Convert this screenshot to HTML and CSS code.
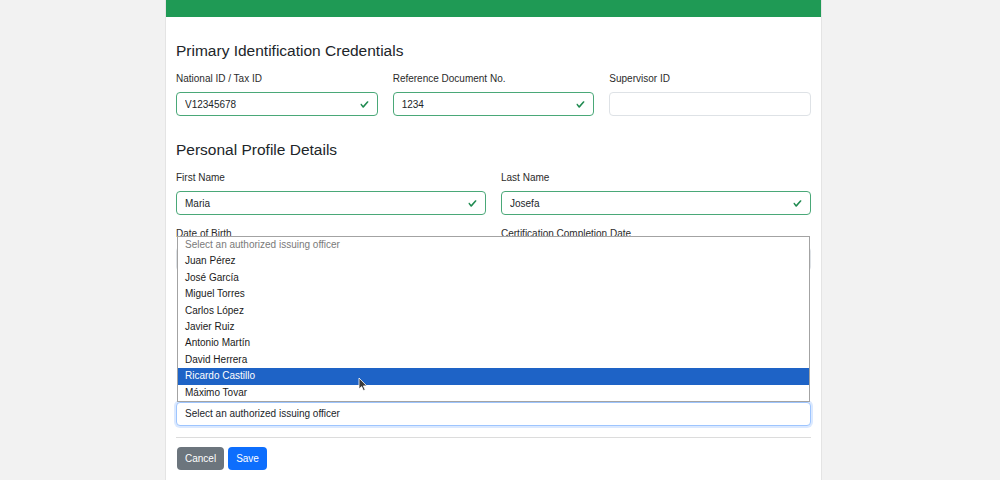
FILE: index.html
```html
<!DOCTYPE html>
<html lang="en">
<head>
<meta charset="utf-8">
<title>Issuing Form</title>
<link rel="stylesheet" href="styles.css">
</head>
<body>
<div class="card">
  <div class="card-bar"></div>
  <div class="card-body">
    <h2 class="section-title">Primary Identification Credentials</h2>
    <div class="row cols-3">
      <div class="field">
        <label class="label">National ID / Tax ID</label>
        <div class="control">
          <input class="input is-valid" type="text" value="V12345678">
          <svg class="check" viewBox="0 0 8 8"><path d="M2.3 6.73.6 4.53c-.4-1.04.46-1.4 1.1-.8l1.1 1.4 3.4-3.8c.6-.63 1.6-.27 1.2.7l-4 4.6c-.43.5-.8.4-1.1.1z"/></svg>
        </div>
      </div>
      <div class="field">
        <label class="label">Reference Document No.</label>
        <div class="control">
          <input class="input is-valid" type="text" value="1234">
          <svg class="check" viewBox="0 0 8 8"><path d="M2.3 6.73.6 4.53c-.4-1.04.46-1.4 1.1-.8l1.1 1.4 3.4-3.8c.6-.63 1.6-.27 1.2.7l-4 4.6c-.43.5-.8.4-1.1.1z"/></svg>
        </div>
      </div>
      <div class="field">
        <label class="label">Supervisor ID</label>
        <div class="control">
          <input class="input" type="text" value="">
        </div>
      </div>
    </div>

    <h2 class="section-title spaced">Personal Profile Details</h2>
    <div class="row cols-2">
      <div class="field">
        <label class="label">First Name</label>
        <div class="control">
          <input class="input is-valid" type="text" value="Maria">
          <svg class="check" viewBox="0 0 8 8"><path d="M2.3 6.73.6 4.53c-.4-1.04.46-1.4 1.1-.8l1.1 1.4 3.4-3.8c.6-.63 1.6-.27 1.2.7l-4 4.6c-.43.5-.8.4-1.1.1z"/></svg>
        </div>
      </div>
      <div class="field">
        <label class="label">Last Name</label>
        <div class="control">
          <input class="input is-valid" type="text" value="Josefa">
          <svg class="check" viewBox="0 0 8 8"><path d="M2.3 6.73.6 4.53c-.4-1.04.46-1.4 1.1-.8l1.1 1.4 3.4-3.8c.6-.63 1.6-.27 1.2.7l-4 4.6c-.43.5-.8.4-1.1.1z"/></svg>
        </div>
      </div>
    </div>
    <div class="row cols-2">
      <div class="field">
        <label class="label">Date of Birth</label>
        <div class="control"><input class="input" type="text" value=""></div>
      </div>
      <div class="field">
        <label class="label">Certification Completion Date</label>
        <div class="control"><input class="input" type="text" value=""></div>
      </div>
    </div>

    <div class="select-wrap" aria-label="Issuing Officer">
      <div class="select">Select an authorized issuing officer</div>
      <ul class="options">
        <li class="option placeholder">Select an authorized issuing officer</li>
        <li class="option">Juan Pérez</li>
        <li class="option">José García</li>
        <li class="option">Miguel Torres</li>
        <li class="option">Carlos López</li>
        <li class="option">Javier Ruiz</li>
        <li class="option">Antonio Martín</li>
        <li class="option">David Herrera</li>
        <li class="option active">Ricardo Castillo</li>
        <li class="option">Máximo Tovar</li>
      </ul>
    </div>

    <hr class="divider">
    <div class="actions">
      <button class="btn btn-secondary" type="button">Cancel</button>
      <button class="btn btn-primary" type="button">Save</button>
    </div>
  </div>
</div>
<svg class="cursor" viewBox="0 0 10 15"><path d="M1 1 L1 12 L3.6 9.6 L5.4 13.6 L7.2 12.8 L5.4 8.9 L8.8 8.9 Z"/></svg>
</body>
</html>
```

FILE: styles.css
```css
* { box-sizing: border-box; }

html, body {
  margin: 0;
  padding: 0;
}

body {
  background: #f2f2f2;
  font-family: "Liberation Sans", Arial, sans-serif;
  color: #212529;
  height: 480px;
  overflow: hidden;
  position: relative;
}

.card {
  margin-left: 165px;
  width: 657px;
  min-height: 480px;
  background: #fff;
  border-left: 1px solid #e4e4e4;
  border-right: 1px solid #e4e4e4;
}

.card-bar {
  height: 17px;
  background: #1f9a55;
}

.card-body {
  padding: 24px 10px 20px;
}

.section-title {
  margin: 0 0 12px;
  font-size: 15.5px;
  line-height: 19px;
  font-weight: 400;
  color: #212529;
}

.section-title.spaced {
  margin-top: 24px;
}

.row {
  display: grid;
  column-gap: 15px;
  margin-bottom: 12px;
}

.cols-3 { grid-template-columns: repeat(3, 1fr); }
.cols-2 { grid-template-columns: repeat(2, 1fr); }

.field {
  display: flex;
  flex-direction: column;
  min-width: 0;
}

.label {
  display: block;
  font-size: 10px;
  line-height: 12px;
  padding-top: 1px;
  margin-bottom: 7px;
  color: #2b2b2b;
}

.control {
  position: relative;
}

.input {
  display: block;
  width: 100%;
  height: 24px;
  margin: 0;
  padding: 0 24px 0 8px;
  font-family: "Liberation Sans", Arial, sans-serif;
  font-size: 10px;
  color: #212529;
  background: #fff;
  border: 1px solid #dee2e6;
  border-radius: 4px;
  outline: none;
}

.input.is-valid {
  border-color: #4aa878;
}

.check {
  position: absolute;
  right: 9px;
  top: 8px;
  width: 9px;
  height: 9px;
  fill: #1f8a50;
}

.select-wrap {
  position: relative;
  margin-top: 131px;
}

.select {
  height: 24px;
  padding: 0 8px;
  font-size: 10px;
  line-height: 22px;
  color: #212529;
  background: #fff;
  border: 1px solid #9ec5fe;
  border-radius: 4px;
  box-shadow: 0 0 0 2px rgba(13, 110, 253, 0.15);
}

.options {
  position: absolute;
  left: 1px;
  right: 1px;
  bottom: 100%;
  margin: 0;
  padding: 0;
  list-style: none;
  background: #fff;
  border: 1px solid #a3a3a3;
}

.option {
  height: 16.4px;
  line-height: 16.4px;
  padding-left: 7px;
  font-size: 10px;
  color: #1a1a1a;
  white-space: nowrap;
}

.option.placeholder {
  color: #7a7a7a;
}

.option.active {
  background: #1e63c6;
  color: #fff;
}

.divider {
  margin: 11px 0 9px;
  border: 0;
  border-top: 1px solid #dcdcdc;
  height: 0;
}

.actions {
  display: flex;
  gap: 4px;
  padding-left: 1px;
}

.btn {
  height: 23px;
  padding: 0 8px;
  font-family: "Liberation Sans", Arial, sans-serif;
  font-size: 10px;
  color: #fff;
  border: 0;
  border-radius: 4px;
  cursor: pointer;
}

.btn-secondary { background: #6c757d; }
.btn-primary { background: #0d6efd; }

.cursor {
  position: absolute;
  left: 358px;
  top: 377px;
  width: 10px;
  height: 15px;
  fill: #3a3a3a;
  stroke: #fff;
  stroke-width: 0.8;
}
```
